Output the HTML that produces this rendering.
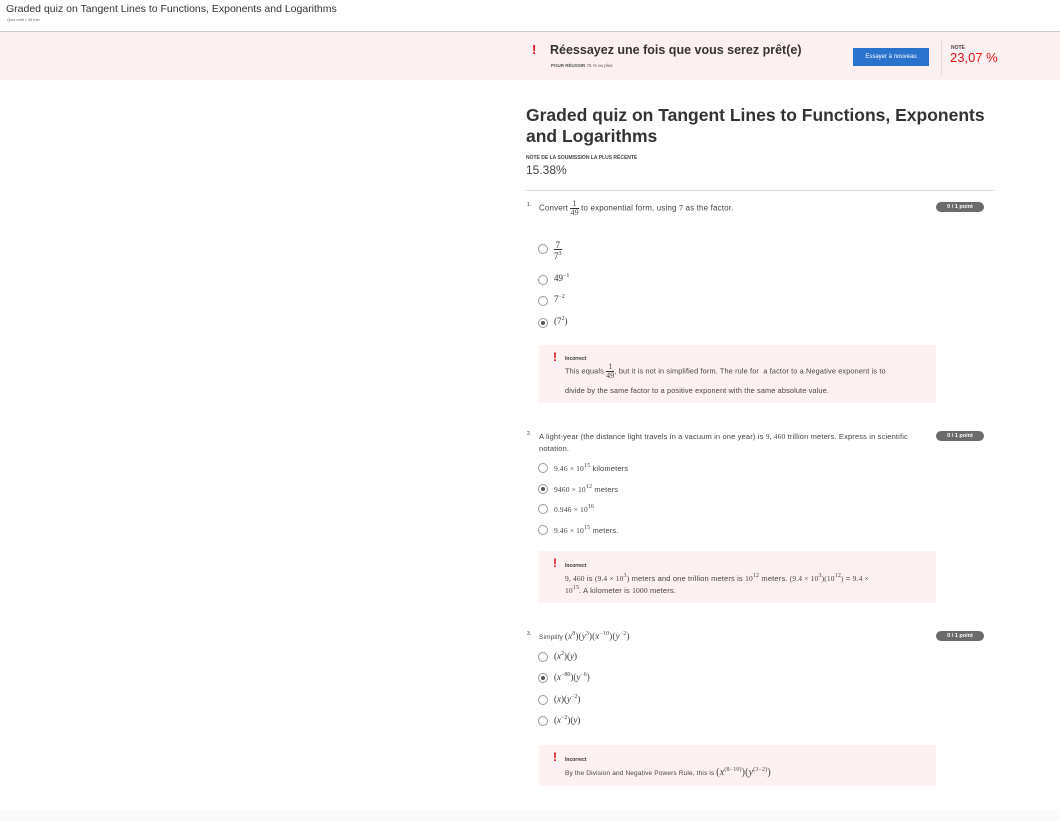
<!DOCTYPE html>
<html><head><meta charset="utf-8"><style>
*{margin:0;padding:0;box-sizing:border-box}
body{width:1060px;height:821px;background:#fff;font-family:"Liberation Sans",sans-serif;color:#333;position:relative;overflow:hidden}
.a{position:absolute;white-space:nowrap}
.m{font-family:"Liberation Serif",serif}
.s{font-size:6px;vertical-align:4px}
.r{position:absolute;width:10px;height:10px;border:1px solid #999;border-radius:50%;background:#fff}
.r.on::after{content:"";position:absolute;left:2px;top:2px;width:4px;height:4px;border-radius:50%;background:#555}
.pill{position:absolute;left:936px;width:48px;height:10px;border-radius:5px;background:#6b6b6b;color:#fff;font-size:5.5px;font-weight:bold;text-align:center;line-height:10px}
.fb{position:absolute;left:539px;width:397px;background:#fdf1f2}
.ex{position:absolute;left:14px;color:#d11;font-weight:bold;font-size:12px}
.inc{position:absolute;left:26px;font-size:5px;font-weight:bold;color:#333}
.t{font-size:8px;color:#444;letter-spacing:0.15px}
.fr{display:inline-block;text-align:center;vertical-align:middle;line-height:8px}
.fr span{display:block}
.fr span:first-child{border-bottom:1px solid #333}
</style></head><body>
<div class="a" style="left:6px;top:3px;font-size:10.5px;color:#333">Graded quiz on Tangent Lines to Functions, Exponents and Logarithms</div>
<div class="a" style="left:7px;top:17px;font-size:4px;color:#666">Quiz noté • 45 min</div>
<div style="position:absolute;left:0;top:31px;width:1060px;height:1px;background:#ccc"></div>
<div style="position:absolute;left:0;top:32px;width:1060px;height:48px;background:#fdf0f1"></div>
<div class="a" style="left:532px;top:42px;color:#d11;font-weight:bold;font-size:13px">!</div>
<div class="a" style="left:550px;top:43px;font-size:12.5px;font-weight:bold;color:#333">Réessayez une fois que vous serez prêt(e)</div>
<div class="a" style="left:551px;top:63px;font-size:4.5px;color:#555"><b>POUR RÉUSSIR</b> 75 % ou plus</div>
<div class="a" style="left:853px;top:48px;width:76px;height:18px;background:#2a73cc;color:#fff;font-size:6px;text-align:center;line-height:18px">Essayer à nouveau</div>
<div style="position:absolute;left:941px;top:39px;width:1px;height:36px;background:#ddd"></div>
<div class="a" style="left:951px;top:45px;font-size:5px;font-weight:bold;color:#444">NOTE</div>
<div class="a" style="left:950px;top:50px;font-size:13px;color:#d11">23,07 %</div>
<div class="a" style="left:526px;top:105px;font-size:17.5px;font-weight:bold;color:#333;line-height:21px;white-space:normal;width:490px">Graded quiz on Tangent Lines to Functions, Exponents and Logarithms</div>
<div class="a" style="left:526px;top:155px;font-size:5px;font-weight:bold;color:#444">NOTE DE LA SOUMISSION LA PLUS RÉCENTE</div>
<div class="a" style="left:526px;top:163px;font-size:12px;color:#444">15.38%</div>
<div style="position:absolute;left:526px;top:190px;width:468px;height:1px;background:#ddd"></div>

<div class="a" style="left:527px;top:202px;font-size:5px">1.</div>
<div class="a t" style="left:539px;top:200px">Convert <span class="fr m" style="font-size:8px"><span>1</span><span>49</span></span> to exponential form, using <span class="m">7</span> as the factor.</div>
<div class="pill" style="top:202px">0 / 1 point</div>
<div class="r" style="left:538px;top:244px"></div>
<div class="a m" style="left:554px;top:241px;font-size:9px"><span class="fr"><span>7</span><span>7<sup class="s">3</sup></span></span></div>
<div class="r" style="left:538px;top:275px"></div>
<div class="a m" style="left:554px;top:273px;font-size:9px">49<span class="s">−1</span></div>
<div class="r" style="left:538px;top:296px"></div>
<div class="a m" style="left:554px;top:294px;font-size:9px">7<span class="s">−2</span></div>
<div class="r on" style="left:538px;top:318px"></div>
<div class="a m" style="left:554px;top:316px;font-size:9px">(7<span class="s">2</span>)</div>
<div class="fb" style="top:345px;height:58px"><div class="ex" style="top:5px">!</div><div class="inc" style="top:11px">Incorrect</div>
<div class="a t" style="left:26px;top:18px;font-size:7.3px">This equals <span class="fr m" style="font-size:8px"><span>1</span><span>49</span></span>, but it is not in simplified form. The rule for &nbsp;a factor to a Negative exponent is to</div>
<div class="a t" style="left:26px;top:41px;font-size:7.3px">divide by the same factor to a positive exponent with the same absolute value.</div></div>

<div class="a" style="left:527px;top:431px;font-size:5px">2.</div>
<div class="a t" style="left:539px;top:432px;font-size:7.5px">A light-year (the distance light travels in a vacuum in one year) is <span class="m">9, 460</span> trillion meters. Express in scientific</div>
<div class="a t" style="left:539px;top:444px;font-size:7.5px">notation.</div>
<div class="pill" style="top:431px">0 / 1 point</div>
<div class="r" style="left:538px;top:463px"></div><div class="a t" style="left:554px;top:463px;font-size:7.5px"><span class="m">9.46 × 10<span class="s">15</span></span> kilometers</div>
<div class="r on" style="left:538px;top:484px"></div><div class="a t" style="left:554px;top:484px;font-size:7.5px"><span class="m">9460 × 10<span class="s">12</span></span> meters</div>
<div class="r" style="left:538px;top:504px"></div><div class="a t" style="left:554px;top:504px;font-size:7.5px"><span class="m">0.946 × 10<span class="s">16</span></span></div>
<div class="r" style="left:538px;top:525px"></div><div class="a t" style="left:554px;top:525px;font-size:7.5px"><span class="m">9.46 × 10<span class="s">15</span></span> meters.</div>
<div class="fb" style="top:551px;height:52px"><div class="ex" style="top:5px">!</div><div class="inc" style="top:12px">Incorrect</div>
<div class="a t" style="left:26px;top:22px;font-size:7.5px"><span class="m">9, 460</span> is <span class="m">(9.4 × 10<span class="s">3</span>)</span> meters and one trillion meters is <span class="m">10<span class="s">12</span></span> meters. <span class="m">(9.4 × 10<span class="s">3</span>)(10<span class="s">12</span>)</span> = <span class="m">9.4 ×</span></div>
<div class="a t" style="left:26px;top:34px;font-size:7.5px"><span class="m">10<span class="s">15</span></span>. A kilometer is <span class="m">1000</span> meters.</div></div>

<div class="a" style="left:527px;top:631px;font-size:5px">3.</div>
<div class="a t" style="left:539px;top:631px;font-size:6.5px">Simplify <span class="m" style="font-size:9px">(<i>x</i><span class="s">8</span>)(<i>y</i><span class="s">3</span>)(<i>x</i><span class="s">−10</span>)(<i>y</i><span class="s">−2</span>)</span></div>
<div class="pill" style="top:631px">0 / 1 point</div>
<div class="r" style="left:538px;top:652px"></div><div class="a m" style="left:554px;top:651px;font-size:9px">(<i>x</i><span class="s">2</span>)(<i>y</i>)</div>
<div class="r on" style="left:538px;top:673px"></div><div class="a m" style="left:554px;top:672px;font-size:9px">(<i>x</i><span class="s">−80</span>)(<i>y</i><span class="s">−6</span>)</div>
<div class="r" style="left:538px;top:695px"></div><div class="a m" style="left:554px;top:694px;font-size:9px">(<i>x</i>)(<i>y</i><span class="s">−2</span>)</div>
<div class="r" style="left:538px;top:716px"></div><div class="a m" style="left:554px;top:715px;font-size:9px">(<i>x</i><span class="s">−2</span>)(<i>y</i>)</div>
<div class="fb" style="top:745px;height:41px"><div class="ex" style="top:5px">!</div><div class="inc" style="top:12px">Incorrect</div>
<div class="a t" style="left:26px;top:22px;font-size:6.5px">By the Division and Negative Powers Rule, this is <span class="m" style="font-size:10px">(<i>x</i><span class="s">(8−10)</span>)(<i>y</i><span class="s">(3−2)</span>)</span></div></div>
<div style="position:absolute;left:0;top:810px;width:1060px;height:11px;background:#fafafa"></div>
</body></html>
